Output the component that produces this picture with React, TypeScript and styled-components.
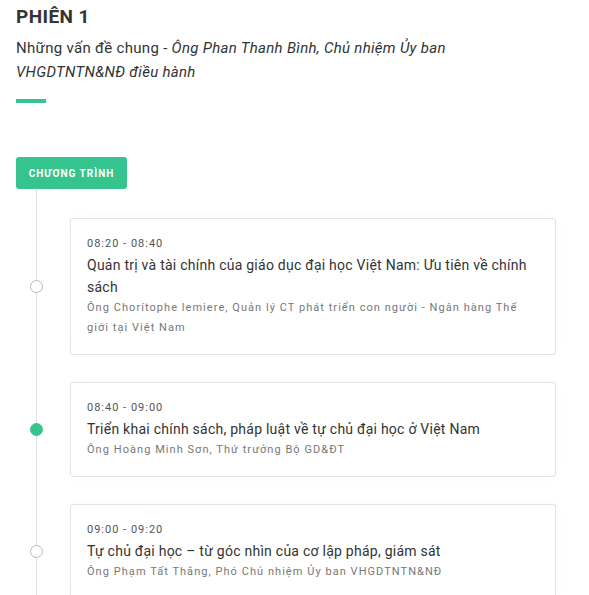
import React from "react";
import styled, { createGlobalStyle } from "styled-components";

const Global = createGlobalStyle`
  html, body { margin: 0; padding: 0; background: #ffffff; }
  body { font-family: Roboto, "Noto Sans", "Liberation Sans", sans-serif; color: #333; }
  * { box-sizing: border-box; }
`;

const Page = styled.div`
  padding: 6px 16px 0 16px;
  width: 589px;
`;

const Heading = styled.h2`
  margin: 0;
  font-size: 19px;
  font-weight: 700;
  line-height: 22px;
  color: #333;
  letter-spacing: 0.4px;
`;

const Subtitle = styled.p`
  margin: 8px 0 0 0;
  font-size: 15px;
  line-height: 24px;
  color: #333;
  letter-spacing: 0.3px;
  width: 470px;
  em { font-style: italic; }
`;

const Bar = styled.div`
  width: 30px;
  height: 4px;
  background: #35c48e;
  margin-top: 15px;
`;

const Button = styled.div`
  display: inline-flex;
  align-items: center;
  justify-content: center;
  margin-top: 54px;
  width: 111px;
  height: 32px;
  background: #35c48e;
  color: #fff;
  border-radius: 3px;
  font-size: 10px;
  font-weight: 700;
  letter-spacing: 1px;
`;

const Timeline = styled.div`
  margin-left: 20px;
  border-left: 1px solid #dedede;
  padding-top: 29px;
  display: flex;
  flex-direction: column;
  gap: 27px;
  width: 520px;
  padding-bottom: 40px;
`;

const Item = styled.div`
  display: flex;
  align-items: center;
  margin-left: -7px;
  gap: 27px;
`;

const Dot = styled.span<{ $active?: boolean }>`
  flex: none;
  width: 13px;
  height: 13px;
  border-radius: 50%;
  background: ${(p) => (p.$active ? "#35c48e" : "#fff")};
  border: 1px solid ${(p) => (p.$active ? "#35c48e" : "#b9b9b9")};
`;

const Card = styled.div`
  flex: 1;
  background: #fff;
  border: 1px solid #e3e3e3;
  border-radius: 3px;
  padding: 15px 17px 16px 16px;
  box-shadow: 0 0 12px rgba(0, 0, 0, 0.025);
`;

const Time = styled.div`
  font-size: 11px;
  line-height: 20px;
  color: #555;
  letter-spacing: 1px;
`;

const Title = styled.div`
  font-size: 14px;
  line-height: 22px;
  color: #333;
  letter-spacing: 0.25px;
`;

const Speaker = styled.div`
  font-size: 11px;
  line-height: 20px;
  color: #777;
  letter-spacing: 1.05px;
`;

const items = [
  {
    time: "08:20 - 08:40",
    title: "Quản trị và tài chính của giáo dục đại học Việt Nam: Ưu tiên về chính sách",
    speaker: "Ông Chorítophe lemiere, Quản lý CT phát triển con người - Ngân hàng Thế giới tại Việt Nam",
    active: false,
  },
  {
    time: "08:40 - 09:00",
    title: "Triển khai chính sách, pháp luật về tự chủ đại học ở Việt Nam",
    speaker: "Ông Hoàng Minh Sơn, Thứ trưởng Bộ GD&ĐT",
    active: true,
  },
  {
    time: "09:00 - 09:20",
    title: "Tự chủ đại học – từ góc nhìn của cơ lập pháp, giám sát",
    speaker: "Ông Phạm Tất Thắng, Phó Chủ nhiệm Ủy ban VHGDTNTN&NĐ",
    active: false,
  },
];

export default function App() {
  return (
    <Page>
      <Global />
      <Heading>PHIÊN 1</Heading>
      <Subtitle>
        Những vấn đề chung - <em>Ông Phan Thanh Bình, Chủ nhiệm Ủy ban VHGDTNTN&amp;NĐ điều hành</em>
      </Subtitle>
      <Bar />
      <Button>CHƯƠNG TRÌNH</Button>
      <Timeline>
        {items.map((it) => (
          <Item key={it.time}>
            <Dot $active={it.active} />
            <Card>
              <Time>{it.time}</Time>
              <Title>{it.title}</Title>
              <Speaker>{it.speaker}</Speaker>
            </Card>
          </Item>
        ))}
      </Timeline>
    </Page>
  );
}
